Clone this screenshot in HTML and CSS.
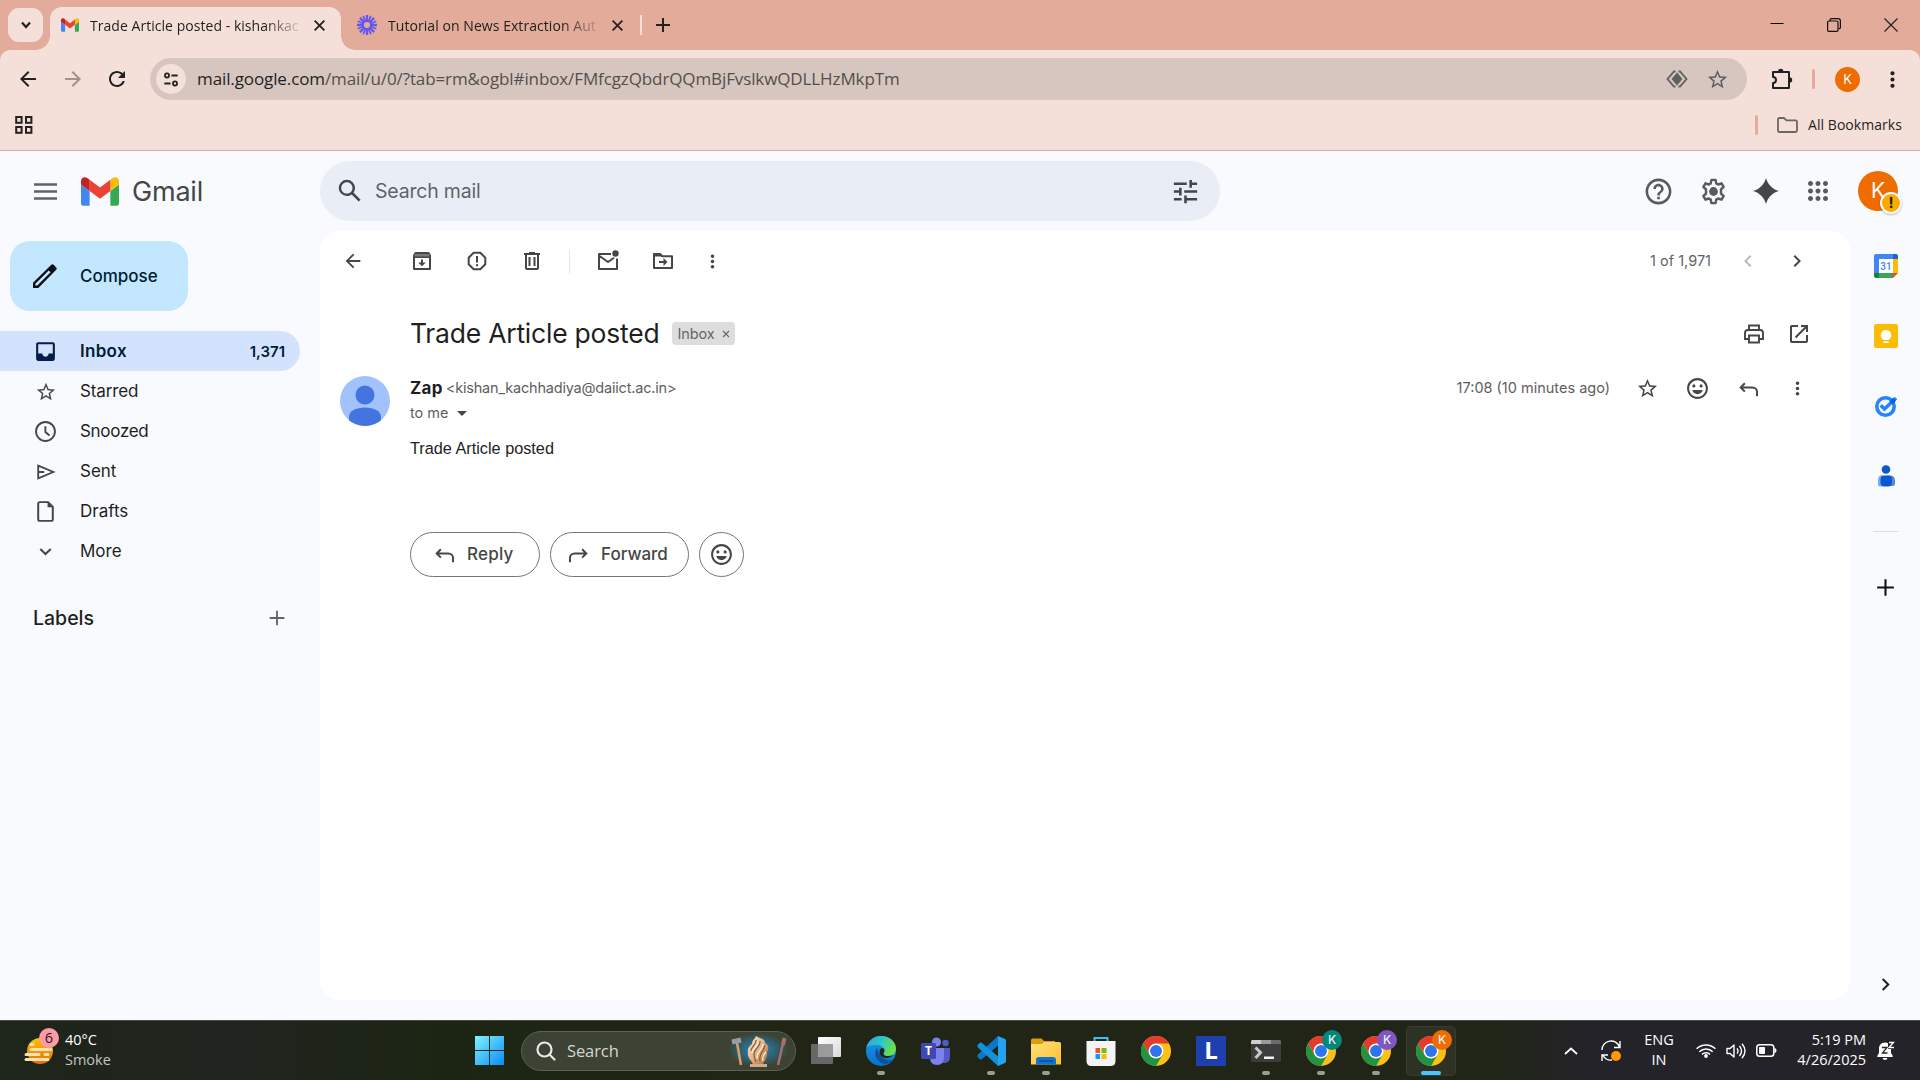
FILE: index.html
```html
<!DOCTYPE html>
<html lang="en">
<head>
<meta charset="utf-8">
<title>Trade Article posted - Gmail</title>
<link rel="stylesheet" href="styles.css">
</head>
<body>
<svg class="defs" aria-hidden="true">
  <defs>
    <linearGradient id="win" x1="0" y1="0" x2="1" y2="1"><stop offset="0" stop-color="#7df3ff"/><stop offset="1" stop-color="#0a8cf5"/></linearGradient>
    <linearGradient id="edgeA" x1="0" y1="0" x2="1" y2="0.4"><stop offset="0" stop-color="#2aa5e0"/><stop offset=".55" stop-color="#2fc6c4"/><stop offset="1" stop-color="#6be04a"/></linearGradient>
    <linearGradient id="edgeB" x1="0" y1="0" x2="0" y2="1"><stop offset="0" stop-color="#1a9be3"/><stop offset="1" stop-color="#0a6fcc"/></linearGradient>
    <linearGradient id="fold" x1="0" y1="0" x2="1" y2="1"><stop offset="0" stop-color="#ffe07a"/><stop offset="1" stop-color="#ffc02e"/></linearGradient>
    <linearGradient id="sun" x1="0" y1="0" x2="0" y2="1"><stop offset="0" stop-color="#ffc400"/><stop offset="1" stop-color="#ea6a05"/></linearGradient>
    <linearGradient id="ice" x1="0" y1="0" x2="1" y2="1"><stop offset="0" stop-color="#f8ead8"/><stop offset=".5" stop-color="#e3b587"/><stop offset="1" stop-color="#a8683a"/></linearGradient>
    <radialGradient id="glow"><stop offset="0" stop-color="#2f8fc4"/><stop offset=".55" stop-color="#2a6f92" stop-opacity=".75"/><stop offset="1" stop-color="#2a6f92" stop-opacity="0"/></radialGradient>
    <linearGradient id="tv" x1="0" y1="0" x2="1" y2="1"><stop offset="0" stop-color="#fff"/><stop offset="1" stop-color="#d8d8d8"/></linearGradient>
  </defs>
  <symbol id="gmail" viewBox="52 42 88 66">
    <path fill="#4285f4" d="M58 108h14V74L52 59v43c0 3.320 2.690 6 6 6"/>
    <path fill="#34a853" d="M120 108h14c3.320 0 6-2.690 6-6V59l-20 15"/>
    <path fill="#fbbc04" d="M120 48v26l20-15v-8c0-7.420-8.470-11.650-14.400-7.200"/>
    <path fill="#ea4335" d="M72 74V48l24 18 24-18v26L96 92"/>
    <path fill="#c5221f" d="M52 51v8l20 15V48l-5.600-4.200c-5.940-4.450-14.400-.220-14.400 7.200"/>
  </symbol>
  <symbol id="star" viewBox="0 0 24 24"><path d="M22 9.240l-7.190-.620L12 2 9.190 8.630 2 9.240l5.460 4.730L5.820 21 12 17.270 18.180 21l-1.630-7.030L22 9.240zM12 15.400l-3.760 2.270 1-4.280-3.320-2.880 4.380-.380L12 6.100l1.710 4.040 4.380.380-3.320 2.880 1 4.280L12 15.400z"/></symbol>
  <symbol id="dots" viewBox="0 0 24 24"><path d="M12 8c1.100 0 2-.9 2-2s-.9-2-2-2-2 .9-2 2 .9 2 2 2zm0 2c-1.100 0-2 .9-2 2s.9 2 2 2 2-.9 2-2-.9-2-2-2zm0 6c-1.100 0-2 .9-2 2s.9 2 2 2 2-.9 2-2-.9-2-2-2z"/></symbol>
  <symbol id="back" viewBox="0 0 24 24"><path d="M20 11H7.830l5.590-5.590L12 4l-8 8 8 8 1.410-1.410L7.830 13H20v-2z"/></symbol>
  <symbol id="smile" viewBox="0 0 24 24"><path d="M11.990 2C6.470 2 2 6.480 2 12s4.470 10 9.990 10C17.520 22 22 17.520 22 12S17.520 2 11.990 2zM12 20c-4.420 0-8-3.580-8-8s3.580-8 8-8 8 3.580 8 8-3.580 8-8 8z"/><circle cx="8.500" cy="9.500" r="1.500"/><circle cx="15.500" cy="9.500" r="1.500"/><path d="M7 13.500h10c-.6 2.300-2.600 3.900-5 3.900s-4.400-1.600-5-3.900z"/></symbol>
  <symbol id="reply" viewBox="0 0 24 24"><path fill="none" stroke="currentColor" stroke-width="1.900" d="M8.500 7 4.500 11l4 4M5 11h10.500c2.800 0 4.700 1.800 4.700 4.300V19.500"/></symbol>
  <symbol id="right" viewBox="0 0 24 24"><path d="M8.590 16.590 13.170 12 8.590 7.410 10 6l6 6-6 6z"/></symbol>
  <symbol id="plus" viewBox="0 0 24 24"><path d="M20 13h-7v7h-2v-7H4v-2h7V4h2v7h7z"/></symbol>
  <symbol id="close" viewBox="0 0 12 12"><path fill="none" stroke="currentColor" stroke-width="1.700" d="M1.500 1.500l9 9M10.500 1.500l-9 9"/></symbol>
  <symbol id="chrome" viewBox="0 0 48 48">
    <circle cx="24" cy="24" r="24" fill="#fbc116"/>
    <path fill="#e33b2e" d="M3.200 12A24 24 0 0 1 44.800 12H24L14 30z"/>
    <path fill="#229342" d="M3.200 12 13.600 30 24 36l5-.3L24 48A24 24 0 0 1 3.200 12z"/>
    <path fill="#229342" d="M24 48 34.400 30 24 34z"/>
    <circle cx="24" cy="24" r="12" fill="#fff"/><circle cx="24" cy="24" r="9.500" fill="#2f74ea"/>
  </symbol>
</svg>

<header class="browser">
  <div class="tabstrip">
    <button class="tab-search"><svg width="10" height="8" viewBox="0 0 10 8"><path fill="none" stroke="#222" stroke-width="2.200" d="M1 1.500 5 6l4-4.500"/></svg></button>
    <div class="tab active">
      <svg width="18" height="14"><use href="#gmail"/></svg>
      <span class="tab-title t-tab1">Trade Article posted - kishankac</span>
      <svg class="x" width="13" height="13"><use href="#close"/></svg>
    </div>
    <div class="tab">
      <svg width="20" height="20" viewBox="0 0 20 20"><g fill="none" stroke="#6457f0" stroke-width="2.300"><circle cx="10" cy="10" r="4.200"/><path d="M10 0v6M10 14v6M0 10h6M14 10h6M2.900 2.900l4.200 4.200M12.900 12.900l4.200 4.200M17.100 2.900l-4.200 4.200M7.100 12.900l-4.200 4.200"/><path stroke-width="1.700" d="M6.200.8l2.300 5.500M13.800.8l-2.300 5.500M6.200 19.200l2.300-5.500M13.800 19.200l-2.300-5.500M.8 6.200l5.500 2.300M.8 13.800l5.500-2.300M19.200 6.200l-5.500 2.300M19.200 13.800l-5.500-2.300"/></g></svg>
      <span class="tab-title t-tab2">Tutorial on News Extraction Aut</span>
      <svg class="x" width="13" height="13"><use href="#close"/></svg>
    </div>
    <i class="tab-sep"></i>
    <svg class="newtab" width="14" height="14" viewBox="0 0 14 14"><path stroke="#222" stroke-width="2" d="M7 0v14M0 7h14"/></svg>
    <div class="winctl">
      <svg width="14" height="14" viewBox="0 0 14 14"><path stroke="#000" d="M.5 5.500h13"/></svg>
      <svg width="14" height="14" viewBox="0 0 14 14"><g fill="none" stroke="#111" stroke-width="1.200"><rect x=".6" y="3" width="10.400" height="10.400" rx="1.200"/><path d="M3 3V2Q3 .6 4.400.6H11Q13.400.6 13.400 3v6.500q0 1.400-1.800 1.400"/></g></svg>
      <svg width="14" height="14" viewBox="0 0 14 14"><path stroke="#222" stroke-width="1.200" d="M.5.5l13 13M13.500.5l-13 13"/></svg>
    </div>
  </div>
  <div class="toolbar">
    <svg class="nav" width="24" height="24" fill="#202124"><use href="#back"/></svg>
    <svg class="nav flip" width="24" height="24" fill="#a3908b"><use href="#back"/></svg>
    <svg class="nav" width="24" height="24" viewBox="0 0 24 24"><path fill="#202124" d="M17.650 6.350C16.200 4.900 14.210 4 12 4c-4.420 0-7.990 3.580-7.990 8s3.570 8 7.990 8c3.730 0 6.840-2.550 7.730-6h-2.080c-.82 2.330-3.040 4-5.650 4-3.310 0-6-2.690-6-6s2.690-6 6-6c1.660 0 3.140.690 4.220 1.780L13 11h7V4l-2.350 2.350z"/></svg>
    <div class="omnibox">
      <span class="site"><svg width="16" height="15" viewBox="0 0 18 16"><g fill="none" stroke="#222" stroke-width="2"><circle cx="4.500" cy="3.500" r="2.300"/><path d="M9.500 3.500h7M1.500 12.500h7"/><circle cx="13.500" cy="12.500" r="2.300"/></g></svg></span>
      <span class="url"><b>mail.google.com</b>/mail/u/0/?tab=rm&amp;ogbl#inbox/FMfcgzQbdrQQmBjFvslkwQDLLHzMkpTm</span>
      <svg width="22" height="18" viewBox="0 0 22 18"><path fill="none" stroke="#5f6062" stroke-width="1.800" d="M9.500 1.500 8 1.500 1.500 9 8 16.500h1.500M12.500 1.500H14L20.500 9 14 16.500h-1.500"/><path fill="#5f6062" d="M11 2.500 16.500 9 11 15.500 5.500 9z"/></svg>
      <svg width="23" height="23" fill="#5f6062"><use href="#star"/></svg>
    </div>
    <svg class="ext" width="22" height="22" viewBox="0 0 22 22"><path fill="none" stroke="#202124" stroke-width="2" stroke-linejoin="round" d="M2 4h16v16H2v-5c4 0 4-6 0-6z"/><path fill="#202124" d="M7 3.500a2.700 2.700 0 0 1 5.400 0zM18.500 9.300a2.700 2.700 0 0 1 0 5.400z"/></svg>
    <i class="bar-sep"></i>
    <span class="profile">K</span>
    <svg class="menu" width="25" height="25" fill="#202124"><use href="#dots"/></svg>
  </div>
  <div class="bookmarks">
    <svg width="18" height="18" viewBox="0 0 18 18"><g fill="none" stroke="#222" stroke-width="2"><rect x="1.200" y="1" width="5.400" height="5.800"/><rect x="11" y="1" width="5.400" height="5.800"/><rect x="1.200" y="11" width="5.400" height="5.800"/><rect x="11" y="11" width="5.400" height="5.800"/></g></svg>
    <i class="bar-sep"></i>
    <svg width="21" height="16" viewBox="0 0 21 16"><path fill="none" stroke="#6b6563" stroke-width="1.800" stroke-linejoin="round" d="M1 2.500Q1 1 2.500 1H7l2.500 2.300h9Q20 3.300 20 4.800v8.700q0 1.500-1.500 1.500h-16Q1 15 1 13.500z"/></svg>
    <span class="t-allbm">All Bookmarks</span>
  </div>
</header>

<div class="gmail">
  <div class="topbar">
    <svg class="burger" width="23" height="17" viewBox="0 0 23 17"><path stroke="#5f6368" stroke-width="2.400" d="M0 1.500h23M0 8.500h23M0 15.500h23"/></svg>
    <svg class="logo" width="38" height="29"><use href="#gmail"/></svg>
    <span class="brand">Gmail</span>
    <div class="search">
      <svg width="30" height="30" viewBox="0 0 24 24" fill="#444746"><path d="M20.490 19l-5.730-5.730C15.530 12.200 16 10.910 16 9.500A6.500 6.500 0 1 0 9.500 16c1.410 0 2.700-.470 3.770-1.240L19 20.490 20.490 19zM5 9.500C5 7.010 7.010 5 9.500 5S14 7.010 14 9.500 11.990 14 9.500 14 5 11.990 5 9.500z"/></svg>
      <span>Search mail</span>
      <svg class="tune" width="31" height="31" viewBox="0 0 24 24" fill="#444746"><path d="M3 17v2h6v-2H3zM3 5v2h10V5H3zm10 16v-2h8v-2h-8v-2h-2v6h2zM7 9v2H3v2h4v2h2V9H7zm14 4v-2H11v2h10zm-6-4h2V7h4V5h-4V3h-2v6z"/></svg>
    </div>
    <div class="top-actions">
      <svg width="31" height="31" viewBox="0 0 24 24" fill="#575b5f"><path d="M11 18h2v-2h-2v2zm1-16C6.480 2 2 6.480 2 12s4.480 10 10 10 10-4.480 10-10S17.520 2 12 2zm0 18c-4.410 0-8-3.590-8-8s3.590-8 8-8 8 3.590 8 8-3.590 8-8 8zm0-14c-2.210 0-4 1.790-4 4h2c0-1.100.9-2 2-2s2 .9 2 2c0 2-3 1.750-3 5h2c0-2.250 3-2.500 3-5 0-2.210-1.790-4-4-4z"/></svg>
      <svg width="31" height="31" viewBox="0 0 24 24"><path fill="none" stroke="#575b5f" stroke-width="1.900" stroke-linejoin="round" d="M10.400 3h3.200l.5 2.700 1.500.9 2.600-.9 1.600 2.800-2 1.800v3.400l2 1.800-1.600 2.800-2.600-.9-1.500.9-.5 2.700h-3.200l-.5-2.700-1.500-.9-2.600.9-1.600-2.800 2-1.800v-3.400l-2-1.800 1.600-2.800 2.600.9 1.500-.9z"/><circle cx="12" cy="12" r="3.400" fill="#575b5f"/></svg>
      <svg width="26" height="26" viewBox="0 0 24 24" fill="#444746"><path d="M12 0C13.600 6 18 10.400 24 12 18 13.600 13.600 18 12 24 10.400 18 6 13.600 0 12 6 10.400 10.400 6 12 0z"/></svg>
      <svg width="30" height="30" viewBox="0 0 24 24" fill="#575b5f"><path d="M6 8c1.100 0 2-.9 2-2s-.9-2-2-2-2 .9-2 2 .9 2 2 2zm6 12c1.100 0 2-.9 2-2s-.9-2-2-2-2 .9-2 2 .9 2 2 2zm-6 0c1.100 0 2-.9 2-2s-.9-2-2-2-2 .9-2 2 .9 2 2 2zm0-6c1.100 0 2-.9 2-2s-.9-2-2-2-2 .9-2 2 .9 2 2 2zm6 0c1.100 0 2-.9 2-2s-.9-2-2-2-2 .9-2 2 .9 2 2 2zm4-8c0 1.100.9 2 2 2s2-.9 2-2-.9-2-2-2-2 .9-2 2zm-4 2c1.100 0 2-.9 2-2s-.9-2-2-2-2 .9-2 2 .9 2 2 2zm6 6c1.100 0 2-.9 2-2s-.9-2-2-2-2 .9-2 2 .9 2 2 2zm0 6c1.100 0 2-.9 2-2s-.9-2-2-2-2 .9-2 2 .9 2 2 2z"/></svg>
    </div>
    <div class="account">K<span class="warn">!</span></div>
  </div>

  <div class="columns">
    <nav class="sidebar">
      <button class="compose"><svg width="24" height="24" viewBox="0 0 24 24"><path fill="#0b0f14" fill-rule="evenodd" d="M0 24v-5.300L18.300.8q1.100-1.100 2.300 0l2.600 2.600q1.100 1.100 0 2.300L5.300 24zM2.400 21.600h1.900L17.600 8.300l-1.900-1.900L2.400 19.700z"/></svg><span class="t-compose">Compose</span></button>
      <a class="item current"><svg width="25" height="25" viewBox="0 0 24 24" fill="#041e49"><path d="M19 3H5c-1.100 0-2 .9-2 2v14c0 1.100.9 2 2 2h14c1.100 0 2-.9 2-2V5c0-1.100-.9-2-2-2zm0 11h-4c0 1.660-1.350 3-3 3s-3-1.340-3-3H5V5h14v9z"/></svg><span class="t-inbox">Inbox</span><em>1,371</em></a>
      <a class="item"><svg width="22" height="22"><use href="#star"/></svg><span class="t-starred">Starred</span></a>
      <a class="item"><svg width="25" height="25" viewBox="0 0 24 24"><path d="M12 2C6.500 2 2 6.500 2 12s4.500 10 10 10 10-4.500 10-10S17.500 2 12 2zm0 18.200A8.200 8.200 0 1 1 12 3.800a8.200 8.200 0 0 1 0 16.400zM12.800 7H11v6l4.200 3.500 1.200-1.400-3.600-3z"/></svg><span class="t-snoozed">Snoozed</span></a>
      <a class="item"><svg width="22" height="22" viewBox="0 0 24 24"><path fill="none" stroke="#444746" stroke-width="2" d="M3.500 5 20 12 3.500 19zM4 12h6"/></svg><span>Sent</span></a>
      <a class="item"><svg width="25" height="25" viewBox="0 0 24 24"><path fill="none" stroke="#444746" stroke-width="1.900" d="M14.500 3H6.500Q5 3 5 4.500v15Q5 21 6.500 21h11q1.500 0 1.500-1.500V7.500z"/><path d="M14 2.500 19.500 8H14z"/></svg><span>Drafts</span></a>
      <a class="item"><svg width="25" height="25" viewBox="0 0 24 24"><path fill="none" stroke="#444746" stroke-width="2" d="M7 9.700 12 14.500l5-4.800"/></svg><span class="t-more">More</span></a>
      <div class="labels"><span>Labels</span><svg width="22" height="22" fill="#5f6368"><use href="#plus"/></svg></div>
    </nav>

    <main class="card">
      <div class="actions">
        <svg class="a-back" width="22" height="22"><use href="#back"/></svg>
        <svg width="24" height="24" viewBox="0 0 24 24"><path fill="none" stroke="#444746" stroke-width="2" stroke-linejoin="round" d="M4 6.500V20h16V6.500L18.500 4h-13zM4 8h16"/><path fill="#77797a" d="M4.500 5h15v2.500h-15z"/><path d="M11 10.500h2v3h2.800L12 17.300l-3.800-3.800H11z"/></svg>
        <svg width="24" height="24" viewBox="0 0 24 24"><path fill="none" stroke="#444746" stroke-width="2" stroke-linejoin="round" d="M8.700 3.700h6.600l5 5v6.600l-5 5H8.700l-5-5V8.700z"/><path d="M11 7h2v6.500h-2zM11 15.200h2v2h-2z"/></svg>
        <svg width="24" height="24" viewBox="0 0 24 24"><path d="M15 4V3H9v1H4v2h1v13c0 1.100.9 2 2 2h10c1.100 0 2-.9 2-2V6h1V4h-5zm2 15H7V6h10v13zM8.500 8h2v9h-2zm5 0h2v9h-2z"/></svg>
        <i class="a-div"></i>
        <svg width="24" height="24" viewBox="0 0 24 24"><path fill="none" stroke="#444746" stroke-width="2" stroke-linejoin="round" d="M15 5H3v15h18V9.500M3.500 7l8.500 6 6-4.200"/><circle cx="19.500" cy="4.500" r="3.200"/></svg>
        <svg width="24" height="24" viewBox="0 0 24 24"><path fill="none" stroke="#444746" stroke-width="2" stroke-linejoin="round" d="M3 5h6l2 2.200h10V19H3z"/><path d="M2.500 4.500H10l2 3h-9.500zM12.500 9l4 4-4 4v-3H8v-2h4.500z"/></svg>
        <svg class="a-more" width="21" height="21"><use href="#dots"/></svg>
        <span class="pager">1 of 1,971</span>
        <svg class="prev flip" width="24" height="24" fill="#b9bbbb"><use href="#right"/></svg>
        <svg class="next" width="24" height="24"><use href="#right"/></svg>
      </div>
      <div class="subject">
        <h1>Trade Article posted</h1>
        <span class="chip"><span>Inbox</span><svg width="8" height="8" viewBox="0 0 12 12"><use href="#close"/></svg></span>
        <svg class="print" width="24" height="24" viewBox="0 0 24 24"><g fill="none" stroke="#444746" stroke-width="1.900"><path d="M7 8V3.500h10V8M7 17H3v-6q0-3 3-3h12q3 0 3 3v6h-4"/><path d="M7 13.500h10v7H7z"/></g></svg>
        <svg width="24" height="24" viewBox="0 0 24 24"><path d="M19 19H5V5h6V3H5c-1.500 0-2 .9-2 2v14c0 1.100.5 2 2 2h14c1.100 0 2-.9 2-2v-6h-2v6zM14 3v2h3.600l-9.800 9.800 1.400 1.400L19 6.400V10h2V3h-7z"/></svg>
      </div>
      <div class="message">
        <svg class="face" width="50" height="50" viewBox="0 0 50 50"><clipPath id="fc"><circle cx="25" cy="25" r="25"/></clipPath><g clip-path="url(#fc)"><path fill="#a1c2fd" d="M0 0h50v50H0z"/><g fill="#4374e0"><circle cx="25" cy="19" r="9.500"/><path d="M9 41c0-6 7-9.500 16-9.500S41 35 41 41v9H9z"/></g></g></svg>
        <div class="content">
          <div class="from">
            <b>Zap</b><span class="t-mail">&lt;kishan_kachhadiya@daiict.ac.in&gt;</span>
            <span class="when">17:08 (10 minutes ago)</span>
            <svg width="23" height="23"><use href="#star"/></svg>
            <svg width="25" height="25"><use href="#smile"/></svg>
            <svg width="25" height="25"><use href="#reply"/></svg>
            <svg width="21" height="21"><use href="#dots"/></svg>
          </div>
          <div class="to"><span>to me</span><i></i></div>
          <p class="body">Trade Article posted</p>
          <div class="buttons">
            <button class="b-reply"><svg width="25" height="25"><use href="#reply"/></svg><span class="t-reply">Reply</span></button>
            <button class="b-fwd"><svg class="flip" width="25" height="25"><use href="#reply"/></svg><span>Forward</span></button>
            <button class="b-emoji"><svg width="25" height="25"><use href="#smile"/></svg></button>
          </div>
        </div>
      </div>
    </main>

    <aside class="addons">
      <svg width="24" height="24" viewBox="0 0 24 24"><path fill="#4285f4" d="M2 0h17v5H5v14H0V2q0-2 2-2z"/><path fill="#1967d2" d="M19 0h3q2 0 2 2v3h-5z"/><path fill="#fbbc04" d="M19 5h5v14h-5z"/><path fill="#34a853" d="M5 19h14v5H5z"/><path fill="#188038" d="M0 19h5v5H2q-2 0-2-2z"/><path fill="#ea4335" d="M19 24v-5h5z"/><path fill="#fff" d="M5 5h14v14H5z"/><text class="cal" x="12" y="15.800" text-anchor="middle">31</text></svg>
      <svg width="24" height="24" viewBox="0 0 24 24"><rect width="24" height="24" rx="2" fill="#fbbc04"/><path fill="#fff" d="M12 6a5.300 5.300 0 0 0-3 9.600V16h6v-.4A5.300 5.300 0 0 0 12 6zM9.500 17.200h5V19h-5z"/></svg>
      <svg width="24" height="24" viewBox="0 0 24 24"><circle cx="11.500" cy="12.500" r="8.700" fill="none" stroke="#2684fc" stroke-width="3.600"/><path fill="none" stroke="#2684fc" stroke-width="3.600" d="M6.700 11.300l3.800 3.800L22 4"/><path fill="#0066da" d="M15.500 7.500 19 3.800l3 3-3.600 3.500z"/></svg>
      <svg width="24" height="24" viewBox="0 0 24 24"><path fill="#7baaf7" d="M4 16q0-5 5-5v11.500H6q-2 0-2-2z"/><path fill="#5b86e8" d="M13 11.500h3q5 0 5 5v3q0 2.500-2.500 2.500H13z"/><rect x="6.500" y="11.500" width="11.500" height="11" rx="4" fill="#0b57d0"/><circle cx="12" cy="5.500" r="4.300" fill="#0b57d0"/></svg>
      <i></i>
      <svg width="25" height="25" fill="#111"><use href="#plus"/></svg>
      <svg class="collapse" width="25" height="25" fill="#222"><use href="#right"/></svg>
    </aside>
  </div>
</div>

<footer class="taskbar">
  <div class="weather">
    <div class="sun"><svg width="32" height="28" viewBox="0 0 32 28"><circle cx="16" cy="14" r="13" fill="url(#sun)"/><g stroke-linecap="round" stroke-width="3" stroke="#f3e2b4"><path d="M7 7.500h2M7 12.500h20M2 17.500h13M21 17.500h3M2 22.500h22"/></g></svg><span class="badge">6</span></div>
    <div class="wtext"><span>40°C</span><span class="dim">Smoke</span></div>
  </div>
  <svg class="start" width="29" height="29" viewBox="0 0 29 29"><path fill="url(#win)" d="M0 0h14v14H0zM15 0h14v14H15zM0 15h14v14H0zM15 15h14v14H15z"/></svg>
  <div class="tsearch">
    <svg width="20" height="20" viewBox="0 0 20 20"><g fill="none" stroke="#e8e8e8" stroke-width="2.200" stroke-linecap="round"><circle cx="8.500" cy="8.500" r="7"/><path d="M13.500 13.500 18.500 18.500"/></g></svg>
    <span>Search</span>
    <svg class="art" width="62" height="38" viewBox="0 0 62 38"><ellipse cx="31" cy="18" rx="30" ry="17" fill="url(#glow)"/><path stroke="#d9a066" stroke-width="2.500" d="M10 11l4 22"/><path stroke="#9a9aa8" stroke-width="5" d="M5 10l9-2"/><path stroke="#a86f66" stroke-width="2.500" d="M57 7 51 33"/><path stroke="#a86f66" stroke-width="4" d="M57.500 6l-1.500 7"/><path fill="url(#ice)" d="M29 4c4 3 9 2 9 7 4 2 4 6 2 9 1 5-2 8-4 12H26c-2-4-6-6-5-12-1-4 2-6 4-8 0-4 3-5 4-8z"/><path fill="none" stroke="#9a5f33" stroke-width="1.300" d="M29 8c1 5-5 6-5 11M33 9c1 6-6 7-6 13 0 3 1 5 2 8M38 13c0 6-7 7-5 16"/><path fill="none" stroke="#fbf1e4" stroke-width="1.200" d="M31 9c1 6-6 7-6 12M36 12c0 6-7 7-6 15M39 20c-2 2-4 5-3 9"/><path fill="#d9a887" d="M23 32h17v3H23z"/></svg>
  </div>
  <div class="apps">
    <span class="app"><svg width="30" height="30" viewBox="0 0 30 30"><rect y="8" width="22" height="20" rx="1" fill="#686868"/><rect x="7" y="1" width="23" height="20" rx="1" fill="url(#tv)"/><path fill="#9b9b9b" d="M7 8h15v13H8q-1 0-1-1z"/></svg></span>
    <span class="app run"><svg width="30" height="30" viewBox="0 0 30 30"><circle cx="15" cy="15" r="15" fill="url(#edgeB)"/><path fill="url(#edgeA)" d="M.3 12C1.500 5 7.500 0 15 0c9 0 15 6 15 12.500 0 5-3.500 8-8 8-3.500 0-5-1.300-4.300-2.600C20 14 17 9.500 11.500 9 6 8.500 1.500 10 .3 12z"/><path fill="#104f9c" d="M11 12c-3 4-2 10 2 13.500 4.500 4 10 3 14.500-2C21 26 13 22 11 12z"/><path fill="#20241a" d="M18.500 14.500c0 2-2 2.500-.8 4 1.800 2 6 2 9.300.4-4 5-13.500 3.500-13.500-3 0-5 5-5 5-1.400z"/></svg></span>
    <span class="app"><svg width="30" height="30" viewBox="0 0 30 30"><circle cx="24.500" cy="7" r="3.200" fill="#5059c9"/><circle cx="15.500" cy="6" r="4.500" fill="#7b83eb"/><path fill="#5059c9" d="M20 12h9v9q0 6-6 6h-3z"/><path fill="#7b83eb" d="M9 12h14v9q0 8-7 8t-7-8z"/><rect y="7" width="15" height="16" rx="1.500" fill="#4148b4"/><text class="tm" x="7.500" y="19.200" text-anchor="middle">T</text></svg></span>
    <span class="app run"><svg width="30" height="30" viewBox="0 0 30 30"><path fill="#0a78c8" d="M22 0 2 18.500q-1.500 1.500 0 3l1.500 1.400q1.300 1 2.500 0L24 8z"/><path fill="#1390dc" d="M22 30 2 11.500q-1.500-1.500 0-3l1.500-1.400q1.300-1 2.500 0L24 22z"/><path fill="#27a2f0" d="M22 0l7 3q1 .5 1 1.700v20.600q0 1.200-1 1.700l-7 3z"/></svg></span>
    <span class="app run"><svg width="30" height="30" viewBox="0 0 30 30"><path fill="#e09c08" d="M0 4q0-1.500 1.500-1.500h9L13 5h11v6H0z"/><path fill="url(#fold)" d="M0 8h11l2-2h15.500Q30 6 30 7.500v21H0z"/><path fill="#1173cf" d="M5 24q0-3 3-3h14q3 0 3 3v4.500H5z"/><path stroke="#0b4f99" stroke-width="1.500" d="M8 25h14"/></svg></span>
    <span class="app"><svg width="30" height="30" viewBox="0 0 30 30"><path fill="none" stroke="#3cc0ee" stroke-width="2" d="M8.500 6V2h13v4"/><path fill="#f4f4f4" d="M.5 5h29v20q0 5-5 5h-19q-5 0-5-5z"/><path fill="#f25022" d="M9.500 12H14v5H9.500z"/><path fill="#7fba00" d="M15.500 12h5v5h-5z"/><path fill="#00a4ef" d="M9.500 18H14v5H9.500z"/><path fill="#ffb900" d="M15.500 18h5v5h-5z"/></svg></span>
    <span class="app"><svg width="30" height="30"><use href="#chrome"/></svg></span>
    <span class="app"><span class="lbox">L</span></span>
    <span class="app run"><svg width="30" height="30" viewBox="0 0 30 30"><rect y="4" width="30" height="22" rx="1.500" fill="#3c3c3c"/><path fill="#cfcfcf" d="M1.500 4H10v4H0V5.500Q0 4 1.500 4z"/><path fill="#9a9a9a" d="M10 4h10v4H10z"/><path fill="#6b6b6b" d="M20 4h8.500Q30 4 30 5.500V8H20z"/><path fill="none" stroke="#c8c8c8" stroke-width="3" d="M4.500 11.500 9.500 16.500 4.500 22"/><path fill="#f2f2f2" d="M13 20.500h10V23H13z"/></svg></span>
    <span class="app run"><svg width="30" height="30"><use href="#chrome"/></svg><span class="pf teal">K</span></span>
    <span class="app run"><svg width="30" height="30"><use href="#chrome"/></svg><span class="pf violet">K</span></span>
    <span class="app run focus"><svg width="30" height="30"><use href="#chrome"/></svg><span class="pf orange">K</span></span>
  </div>
  <div class="tray">
    <svg width="14" height="8" viewBox="0 0 14 8"><path fill="none" stroke="#fff" stroke-width="1.800" d="M1 7l6-5.500L13 7"/></svg>
    <svg class="sync" width="20" height="22" viewBox="0 0 20 22"><path fill="none" stroke="#fff" stroke-width="1.400" d="M1 10A9 9 0 0 1 18.500 7M19 1v6.500h-6M1 21v-6h6M2 15.500A9 9 0 0 0 11 20"/><circle cx="15" cy="16" r="5" fill="#ff9800"/></svg>
    <div class="lang"><span>ENG</span><span>IN</span></div>
    <svg class="wifi" width="20" height="15" viewBox="0 0 20 15"><g fill="none" stroke="#fff" stroke-width="1.500"><path d="M.6 5.800a13.300 13.300 0 0 1 18.800 0M3.300 8.700a9.500 9.500 0 0 1 13.400 0M6 11.400a5.700 5.700 0 0 1 8 0"/></g><circle cx="10" cy="13" r="1.900" fill="#fff"/></svg>
    <svg class="vol" width="20" height="18" viewBox="0 0 20 18"><path fill="none" stroke="#fff" stroke-width="1.400" stroke-linejoin="round" d="M1 6.500h3L8 3v12l-4-3.500H1zM11 6.300q2 2.700 0 5.400M13.500 4q4 5 0 10M16 1.800q6 7.200 0 14.400"/></svg>
    <svg class="bat" width="21" height="13" viewBox="0 0 21 13"><rect x=".8" y=".8" width="17" height="11.400" rx="2.800" fill="none" stroke="#fff" stroke-width="1.500"/><rect x="3" y="3" width="6" height="7" rx=".8" fill="#fff"/><path fill="#fff" d="M18.500 4q2 .3 2 2.500t-2 2.500z"/></svg>
    <div class="clock"><span>5:19 PM</span><span>4/26/2025</span></div>
    <svg class="bell" width="18" height="20" viewBox="0 0 18 20"><path fill="#fff" d="M8 1.500c-3.700 0-6 2.800-6 6V12L.3 14.800V16h15.400v-1.200L14 12V8h-3V2.300Q9.700 1.500 8 1.500zM5.500 17h5q-.5 2-2.500 2t-2.500-2z"/><path fill="none" stroke="#24242a" stroke-width="1.300" d="M5 6.500h5L5.500 12h5"/><path fill="none" stroke="#fff" stroke-width="1.300" d="M12 1.500h4.500L12 6.500h5"/></svg>
  </div>
</footer>
</body>
</html>
```
FILE: styles.css
```css
* { box-sizing: border-box; }
body { margin: 0; width: 1920px; height: 1080px; overflow: hidden; display: flex; flex-direction: column; font-family: Inter, Roboto, sans-serif; color: #1f1f1f; background: #f8fafd; }
svg { display: block; flex: none; }
i { display: block; flex: none; }
button { font: inherit; color: inherit; padding: 0; border: 0; background: none; }
.defs { position: absolute; width: 0; height: 0; }
.flip { transform: scaleX(-1); }

/* browser chrome */
.browser { height: 151px; flex: none; background: linear-gradient(#e3ab9a 60px, #f5e0d9 60px); border-bottom: 1px solid #c9b4b1; font-family: "Open Sans", "Noto Sans", sans-serif; font-size: 14px; }
.tabstrip { height: 50px; background: #e3ab9a; display: flex; align-items: center; padding-left: 8px; }
.tab-search { width: 35px; height: 34px; border-radius: 11px; background: #f5e0d9; display: flex; align-items: center; justify-content: center; }
.tab { display: flex; align-items: center; height: 50px; padding-left: 16px; }
.tab.active { width: 291px; height: 43px; margin: 7px 0 0 7px; padding: 0 0 7px 11px; background: #f5e0d9; border-radius: 12px 12px 0 0; position: relative; }
.tab.active::before, .tab.active::after { content: ""; position: absolute; bottom: 0; width: 14px; height: 14px; }
.tab.active::before { left: -14px; background: radial-gradient(circle at 0 0, transparent 13.5px, #f5e0d9 14px); }
.tab.active::after { right: -14px; background: radial-gradient(circle at 100% 0, transparent 13.5px, #f5e0d9 14px); }
.tab-title { width: 211px; margin-left: 11px; white-space: nowrap; -webkit-mask-image: linear-gradient(90deg, #000 175px, transparent 214px); mask-image: linear-gradient(90deg, #000 175px, transparent 214px); }
.t-tab1 { letter-spacing: .04px; }
.t-tab2 { letter-spacing: .06px; }
.x { margin-left: 12px; color: #222; }
.tab-sep { width: 2px; height: 20px; margin-left: 16px; background: #f5e0d9; }
.newtab { margin-left: 14px; }
.winctl { margin-left: auto; display: flex; gap: 43px; padding-right: 22px; }
.toolbar { height: 58px; display: flex; align-items: center; padding-left: 16px; border-radius: 10px 10px 0 0; background: #f5e0d9; }
.nav { margin-right: 21px; }
.nav:nth-child(2) { margin-right: 20px; }
.omnibox { width: 1597px; height: 42px; border-radius: 21px; background: #d7c6bf; display: flex; align-items: center; padding-left: 6px; }
.site { width: 30px; height: 30px; border-radius: 50%; background: #f5e0d9; display: flex; align-items: center; justify-content: center; }
.url { margin-left: 11px; margin-right: auto; padding-bottom: 1px; font-size: 17px; letter-spacing: -.11px; color: #534f4d; white-space: nowrap; }
.url b { font-weight: 400; color: #1f1f1f; }
.omnibox > svg { margin-right: 18px; }
.ext { margin-left: 24px; }
.bar-sep { width: 3px; height: 20px; border-radius: 2px; background: #e3ab9a; }
.toolbar .bar-sep { margin-left: 19px; }
.profile { width: 25px; height: 25px; margin-left: 20px; border-radius: 50%; background: #ef6c00; color: #fff; font: 13px/25px Inter, sans-serif; text-align: center; }
.menu { margin-left: 20px; }
.bookmarks { height: 42px; display: flex; align-items: center; padding: 0 18px 8px 15px; background: #f5e0d9; color: #1f1f1f; }
.bookmarks .bar-sep { margin-left: auto; margin-right: 19px; }
.bookmarks span { margin-left: 10px; padding-bottom: 2px; letter-spacing: .05px; }

/* mail header */
.gmail { flex: 1; min-height: 0; display: flex; flex-direction: column; background: #f8fafd; }
.topbar { height: 80px; flex: none; display: flex; align-items: center; padding-left: 34px; }
.logo { margin-left: 24px; }
.brand { width: 188px; margin-left: 13px; font-size: 27px; letter-spacing: -.2px; color: #444746; }
.search { width: 900px; height: 60px; border-radius: 30px; background: #e9eef6; display: flex; align-items: center; padding: 0 19px 0 15px; font-size: 19.500px; letter-spacing: -.2px; color: #5f6368; }
.search span { margin-left: 10px; }
.tune { margin-left: auto; }
.top-actions { display: flex; align-items: center; margin-left: 423px; gap: 24px; }
.account { position: relative; width: 40px; height: 40px; margin-left: 25px; border-radius: 50%; background: #ef6c00; color: #fff; font-size: 21px; line-height: 40px; text-align: center; }
.warn { position: absolute; left: 22px; top: 21px; width: 22px; height: 22px; border: 2px solid #f8fafd; border-radius: 50%; background: #f9ab00; color: #1f1f1f; font-weight: 700; font-size: 15px; line-height: 18px; box-shadow: 0 1px 2px rgba(0, 0, 0, .25); }
.columns { flex: 1; min-height: 0; display: flex; }

/* sidebar */
.sidebar { width: 320px; flex: none; padding-top: 10px; font-size: 17px; }
.compose { width: 178px; height: 70px; margin: 0 0 20px 10px; border-radius: 20px; background: #c2e7ff; color: #001d35; font-weight: 500; display: flex; align-items: center; padding-left: 23px; }
.compose span { margin-left: 23px; }
.item { display: flex; align-items: center; width: 300px; height: 40px; padding-right: 15px; fill: #444746; }
.item svg { margin: 0 0 0 33px; }
.item svg[width="22"] { margin: 1px 1px 0 35px; }
.item span { margin-left: 22px; }
.current { border-radius: 0 20px 20px 0; background: #d3e3fd; color: #001d35; font-weight: 600; }
.t-inbox { letter-spacing: .3px; }
.t-starred { letter-spacing: -.15px; }
.t-snoozed { letter-spacing: -.3px; }
.item em { margin-left: auto; font-style: normal; font-size: 15px; }
.labels { display: flex; align-items: center; justify-content: space-between; width: 288px; margin-top: 35px; padding-left: 33px; font-size: 19.500px; font-weight: 500; }

/* conversation */
.card { width: 1530px; flex: none; height: 769px; border-radius: 20px; background: #fff; fill: #444746; color: #444746; }
.actions { height: 60px; display: flex; align-items: center; padding-left: 22px; }
.actions svg + svg { margin-left: 31px; }
.actions .a-back + svg { margin-left: 46px; }
.a-div { width: 1px; height: 25px; margin: 0 26px 0 25px; background: #e3e5e8; }
.actions svg.a-more { margin-left: 27px; }
.pager { margin-left: auto; padding-bottom: 2px; font-size: 14.500px; color: #5f6368; }
.prev { margin-left: 25px; }
.actions svg.prev + svg.next { margin: 0 41px 0 25px; }
.subject { height: 85px; display: flex; align-items: center; padding: 0 39px 0 90px; }
h1 { margin: 0; padding-bottom: 2px; font-weight: 400; font-size: 26.500px; letter-spacing: -.23px; color: #1f1f1f; white-space: nowrap; }
.chip { width: 63px; height: 23px; margin-left: 13px; border-radius: 4px; background: #ddd; color: #666; font-size: 14.500px; letter-spacing: -.1px; display: flex; align-items: center; padding: 0 0 1px 5px; }
.chip svg { margin: 1px 0 0 7px; color: #666; }
.print { margin-left: auto; margin-right: 21px; }
.message { display: flex; padding-left: 20px; }
.content { flex: 1; margin-left: 20px; }
.from { height: 24px; display: flex; align-items: center; padding-right: 42px; }
.from b { font-size: 17px; font-weight: 700; letter-spacing: .3px; color: #1f1f1f; }
.from span { padding-bottom: 1px; font-size: 14.500px; color: #5e5e5e; }
.from .t-mail { margin-left: 3px; letter-spacing: -.2px; }
.from .when { margin-left: auto; }
.from svg { margin-left: 26px; }
.to { height: 26px; display: flex; align-items: center; font-size: 14.500px; color: #5e5e5e; }
.to span { padding-bottom: 2px; }
.to i { margin-left: 8px; border: 5px solid transparent; border-top-color: #444746; border-bottom: 0; }
.body { margin: 12px 0 0; font: 16.250px/20px "Liberation Sans", Arial, sans-serif; color: #222; white-space: nowrap; }
.buttons { display: flex; gap: 10px; margin-top: 74px; font-size: 17px; font-weight: 500; }
.buttons button { height: 45px; border: 1px solid #747775; border-radius: 23px; display: flex; align-items: center; padding-left: 21px; color: #444746; }
.b-reply { width: 130px; }
.b-fwd { width: 139px; }
.b-fwd svg { margin-left: -6px; }
.buttons .b-emoji { width: 45px; padding-left: 9px; }
.buttons span { margin-left: 10px; padding-bottom: 1px; }
.t-reply { letter-spacing: .2px; }

/* side panel */
.addons { width: 70px; flex: none; display: flex; flex-direction: column; align-items: center; padding: 23px 0 0 1px; gap: 46px; }
.addons i { width: 25px; height: 1px; margin-top: -3px; background: #dadce0; }
.addons i + svg { margin-top: -3px; }
.collapse { margin: auto 0 23px; }
.cal { font: 500 10px Roboto, sans-serif; fill: #4285f4; }

/* taskbar */
.taskbar { height: 60px; flex: none; display: flex; align-items: center; border-top: 1px solid #484b44; background: linear-gradient(90deg, #1e2519 0, #20241f 240px, #1c2513 450px, #212516 800px, #212517 1500px, #24232a 1590px, #24232a 100%); color: #fff; font-family: "Open Sans", "Noto Sans", sans-serif; font-size: 14.500px; line-height: 20px; }
.weather { display: flex; width: 475px; padding-left: 24px; }
.sun { position: relative; width: 36px; padding-top: 6px; }
.badge { position: absolute; left: 15px; top: -3px; width: 20px; height: 20px; border-radius: 50%; background: #ff99a4; color: #222; text-align: center; }
.wtext { display: flex; flex-direction: column; margin: -1px 0 0 5px; }
.lang, .clock { margin-top: -2px; }
.dim { color: #c4c5c2; }
.tsearch { width: 275px; height: 40px; margin-left: 17px; border: 1px solid #5c6154; border-radius: 20px; background: #3d4334; display: flex; align-items: center; padding-left: 14px; font-size: 16.500px; color: #d4d6d0; }
.tsearch span { margin-left: 11px; letter-spacing: -.1px; }
.art { margin: 0 6px 0 auto; }
.apps { display: flex; gap: 5px; margin-left: 5px; }
.app { position: relative; width: 50px; height: 50px; display: flex; align-items: center; justify-content: center; border-radius: 5px; }
.run::after { content: ""; position: absolute; bottom: 1px; left: 21px; width: 8px; height: 4px; border-radius: 2px; background: #9b9c93; }
.focus { background: #2e3224; box-shadow: inset 0 0 0 1px #383c30; }
.focus::after { left: 15px; width: 20px; background: #4cc2ff; }
.lbox { width: 30px; height: 30px; background: #1e3fae; color: #fff; font: 700 24px/28px "Open Sans", sans-serif; text-align: center; }
.pf { position: absolute; left: 26px; top: 4px; width: 20px; height: 20px; border-radius: 50%; color: #e8f0ee; font: 500 12px/20px Inter, sans-serif; text-align: center; }
.teal { background: #00897b; }
.violet { background: #7e57c2; }
.orange { background: #ef6c00; }
.tm { font: 700 12px "Open Sans", sans-serif; fill: #fff; }
.tray { display: flex; align-items: center; margin-left: 108px; }
.sync { margin-left: 23px; }
.lang { width: 56px; margin-left: 10px; display: flex; flex-direction: column; align-items: center; }
.wifi { margin-left: 9px; }
.vol { margin-left: 10px; }
.bat { margin-left: 10px; }
.clock { width: 76px; margin-left: 13px; display: flex; flex-direction: column; align-items: flex-end; white-space: nowrap; }
.bell { margin-left: 11px; }
```
